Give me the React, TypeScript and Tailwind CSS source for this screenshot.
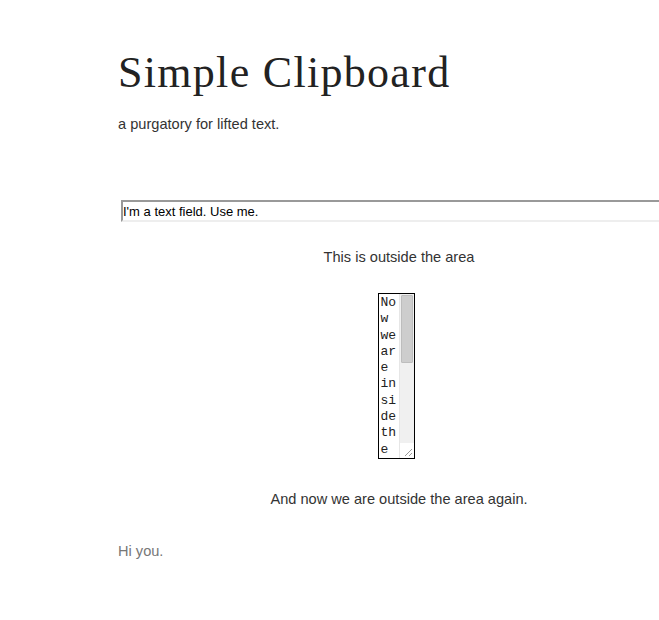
import React from 'react';

// narrow textarea with a drawn scrollbar, since headless overlays hide the native one
function TinyArea() {
    return (
        <div className="ml-[-6px] flex w-[37px] h-[166px] border border-black bg-white">
            <textarea
                readOnly
                defaultValue="Now we are inside the area, scroll me."
                className="w-[20px] h-full resize-none overflow-hidden border-0 pl-[2px] pr-0 pt-[1px] text-[13px] leading-[16.3px] font-['Liberation_Mono','Courier_New',monospace] text-[#222] outline-none"
            />
            <div className="relative w-[15px] h-full bg-[#f0f0f0] border-l border-[#e6e6e6]">
                <div className="absolute left-[1px] top-[1px] w-[12px] h-[68px] rounded-[1px] bg-[#cdcdcd] border border-[#bdbdbd]" />
                <div className="absolute left-0 bottom-0 w-[14px] h-[15px] bg-white">
                    <svg width="14" height="15" viewBox="0 0 14 15" className="block">
                        <path d="M12 6 L5 13 M12 10 L9 13" stroke="#9a9a9a" strokeWidth="1" />
                    </svg>
                </div>
            </div>
        </div>
    );
}

export default function App() {
    return (
        <div className="min-h-screen bg-white">
            <div className="w-[562px] ml-[118px] pt-[46px] text-[14.6px] text-[#333] font-['Liberation_Sans',Arial,sans-serif]">
                <h1 className="text-[44px] leading-[54px] text-[#222] font-['Liberation_Serif',Georgia,serif] tracking-[1.3px]">
                    Simple Clipboard
                </h1>
                <p className="mt-[16px] leading-[16px]">a purgatory for lifted text.</p>

                <input
                    type="text"
                    defaultValue="I'm a text field. Use me."
                    className="mt-[68px] ml-[3px] block w-[560px] h-[22px] px-0 text-[13px] text-black bg-white border-2 border-t-[#999] border-l-[#999] border-r-[#eee] border-b-[#eee] outline-none"
                />

                <p className="mt-[27px] text-center leading-[16px]">This is outside the area</p>

                <div className="mt-[28px] flex justify-center">
                    <TinyArea />
                </div>

                <p className="mt-[32px] text-center leading-[16px]">And now we are outside the area again.</p>

                <p className="mt-[36px] leading-[16px] text-[#777]">Hi you.</p>
            </div>
        </div>
    );
}
